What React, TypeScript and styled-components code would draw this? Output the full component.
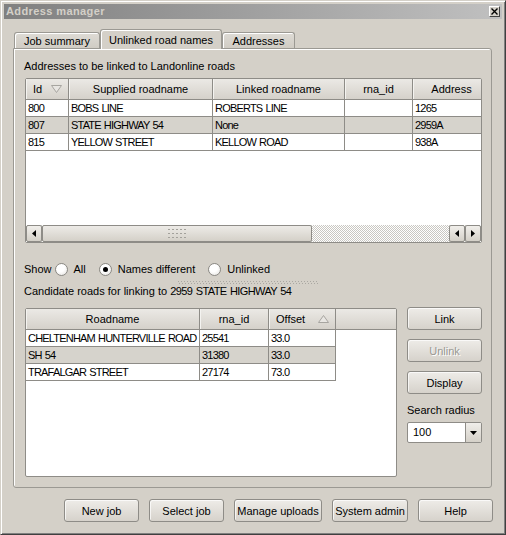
import React from "react";
import styled, { createGlobalStyle } from "styled-components";

const GlobalStyle = createGlobalStyle`
  html, body { margin: 0; padding: 0; background: #d4d0c8; }
  body { font-family: "Liberation Sans", Arial, sans-serif; font-size: 11px; color: #000; }
  * { box-sizing: border-box; }
`;

const LINE = "#8e8c87";

const Window = styled.div`
  width: 506px;
  height: 535px;
  background: #d4d0c8;
  border: 1px solid;
  border-color: #d4d0c8 #404040 #404040 #d4d0c8;
  box-shadow: inset 1px 1px #fff, inset -1px -1px #808080;
  padding: 3px;
  display: flex;
  flex-direction: column;
`;

const TitleBar = styled.div`
  height: 15px;
  flex: none;
  display: flex;
  align-items: center;
  padding: 0 2px;
  background: linear-gradient(to right, #808080, #c0c0c0);
`;

const Title = styled.span`
  font-weight: bold;
  font-size: 11px;
  letter-spacing: 0.4px;
  color: #d4d0c8;
  line-height: 15px;
`;

const CloseButton = styled.div`
  margin-left: auto;
  width: 11px;
  height: 11px;
  background: #d4d0c8;
  border: 1px solid;
  border-color: #fff #404040 #404040 #fff;
  display: flex;
  align-items: center;
  justify-content: center;
`;

const Body = styled.div`
  flex: 1;
  display: flex;
  flex-direction: column;
  padding: 10px 10px 0 9px;
`;

const TabBar = styled.div`
  display: flex;
  align-items: flex-end;
  height: 20px;
  padding-left: 1px;
  margin-bottom: -1px;
  position: relative;
  z-index: 1;
`;

const Tab = styled.div<{ $selected?: boolean; $w: number }>`
  width: ${(p) => p.$w}px;
  height: ${(p) => (p.$selected ? 20 : 16)}px;
  margin-bottom: ${(p) => (p.$selected ? 0 : 1)}px;
  border: 1px solid #9b9993;
  border-bottom: none;
  border-radius: 3px 3px 0 0;
  background: ${(p) => (p.$selected ? "#d4d0c8" : "linear-gradient(#dedbd5, #d0ccc4)")};
  box-shadow: inset 1px 1px #fff;
  display: flex;
  align-items: center;
  justify-content: center;
  white-space: nowrap;
`;

const Pane = styled.div`
  height: 440px;
  flex: none;
  border: 1px solid #9b9993;
  border-radius: 0 3px 3px 3px;
  box-shadow: inset 1px 1px #fff;
  padding: 11px 0 0 11px;
  display: flex;
  flex-direction: column;
`;

const SectionLabel = styled.div<{ $mt?: number }>`
  height: 13px;
  line-height: 13px;
  margin-top: ${(p) => p.$mt ?? 0}px;
  margin-left: -1px;
  white-space: nowrap;
`;

const Caps = styled.span`
  letter-spacing: -0.6px;
  word-spacing: 1px;
`;

const TableFrame = styled.div<{ $w: number; $h: number; $mt: number }>`
  width: ${(p) => p.$w}px;
  height: ${(p) => p.$h}px;
  margin-top: ${(p) => p.$mt}px;
  flex: none;
  border: 1px solid ${LINE};
  border-radius: 2px;
  background: #fff;
  overflow: hidden;
  display: flex;
  flex-direction: column;
`;

const HeaderRow = styled.div`
  display: flex;
  height: 21px;
  flex: none;
  border-bottom: 1px solid ${LINE};
  background: linear-gradient(#ebe9e5, #d5d1ca);
`;

const HeaderCell = styled.div<{ $w: number; $sort?: boolean }>`
  width: ${(p) => p.$w}px;
  flex: none;
  border-right: 1px solid ${LINE};
  box-shadow: inset 1px 0 #f4f3f0;
  display: flex;
  align-items: center;
  justify-content: ${(p) => (p.$sort ? "space-between" : "center")};
  padding: ${(p) => (p.$sort ? "0 6px 0 7px" : "0 2px")};
  white-space: nowrap;
  overflow: hidden;
`;

const TableBody = styled.div`
  flex: 1;
  display: flex;
  flex-direction: column;
`;

const DataRow = styled.div`
  display: flex;
  height: 17px;
  flex: none;
`;

const Cell = styled.div<{ $w: number; $alt?: boolean }>`
  width: ${(p) => p.$w}px;
  height: 17px;
  flex: none;
  border-right: 1px solid ${LINE};
  border-bottom: 1px solid ${LINE};
  background: ${(p) => (p.$alt ? "#d6d3cc" : "#fff")};
  padding: 0 2px;
  line-height: 16px;
  white-space: nowrap;
  overflow: hidden;
  letter-spacing: -0.8px;
  word-spacing: 0.8px;
`;

const HScroll = styled.div`
  height: 17px;
  flex: none;
  display: flex;
  background-color: #fff;
  background-image: repeating-conic-gradient(#c9c7c2 0 25%, #fff 0 50%);
  background-size: 2px 2px;
`;

const ScrollBtn = styled.div`
  width: 16px;
  height: 17px;
  flex: none;
  border: 1px solid ${LINE};
  border-radius: 2px;
  background: linear-gradient(#f1efeb, #d4d0c8);
  display: flex;
  align-items: center;
  justify-content: center;
`;

const Thumb = styled.div<{ $w: number }>`
  width: ${(p) => p.$w}px;
  flex: none;
  border: 1px solid ${LINE};
  border-radius: 2px;
  background: linear-gradient(#edebe7, #d4d0c8);
  display: flex;
  align-items: center;
  justify-content: center;
`;

const Grip = styled.div`
  width: 18px;
  height: 9px;
  background-image:
    linear-gradient(90deg, #a3a19b 2px, transparent 2px),
    linear-gradient(90deg, #a3a19b 2px, transparent 2px),
    linear-gradient(90deg, #a3a19b 2px, transparent 2px);
  background-size: 4px 1px;
  background-position: 0 0, 0 4px, 0 8px;
  background-repeat: repeat-x;
`;

const Track = styled.div`
  flex: 1;
`;

const FilterRow = styled.div`
  display: flex;
  align-items: center;
  height: 16px;
  margin-top: 18px;
  margin-left: -1px;
  white-space: nowrap;
`;

const ShowLabel = styled.span`
  margin-right: 3px;
`;

const RadioOption = styled.label`
  display: flex;
  align-items: center;
  gap: 6px;
  margin-right: 13px;
`;

const RadioCircle = styled.span<{ $checked?: boolean }>`
  width: 13px;
  height: 13px;
  border-radius: 50%;
  border: 1px solid #8a8883;
  background: radial-gradient(circle at 40% 35%, #fff 40%, #e2e0db);
  display: flex;
  align-items: center;
  justify-content: center;
  &::after {
    content: "";
    width: 5px;
    height: 5px;
    border-radius: 50%;
    background: #000;
    display: ${(p) => (p.$checked ? "block" : "none")};
  }
`;

const Splitter = styled.div`
  width: 140px;
  height: 3px;
  margin: 4px 0 0 153px;
  background-image:
    linear-gradient(90deg, #aaa8a2 1px, transparent 1px),
    linear-gradient(90deg, #aaa8a2 1px, transparent 1px);
  background-size: 3px 1px, 3px 1px;
  background-position: 0 0, 1px 2px;
  background-repeat: repeat-x;
`;

const LowerSection = styled.div`
  display: flex;
  gap: 10px;
`;

const SideColumn = styled.div`
  width: 75px;
  display: flex;
  flex-direction: column;
  margin-top: 9px;
`;

const Button = styled.button<{ $w?: number; $mt?: number }>`
  width: ${(p) => p.$w ?? 75}px;
  height: 23px;
  flex: none;
  margin-top: ${(p) => p.$mt ?? 0}px;
  border: 1px solid ${LINE};
  border-radius: 3px;
  background: linear-gradient(#eeece8, #d6d2cb);
  box-shadow: inset 1px 1px rgba(255, 255, 255, 0.7);
  font: 11px "Liberation Sans", Arial, sans-serif;
  color: #000;
  padding: 0;
  white-space: nowrap;
  &:disabled {
    color: #9a9893;
    text-shadow: 1px 1px #fff;
  }
`;

const SideLabel = styled.div`
  height: 13px;
  line-height: 13px;
  margin-top: 10px;
  white-space: nowrap;
`;

const Combo = styled.div`
  width: 75px;
  height: 21px;
  margin-top: 5px;
  border: 1px solid ${LINE};
  border-radius: 2px;
  background: #fff;
  display: flex;
  overflow: hidden;
`;

const ComboText = styled.div`
  flex: 1;
  padding-left: 5px;
  line-height: 19px;
`;

const ComboArrow = styled.div`
  width: 16px;
  border-left: 1px solid ${LINE};
  background: linear-gradient(#f0eeea, #d4d0c8);
  display: flex;
  align-items: center;
  justify-content: center;
`;

const FooterRow = styled.div`
  display: flex;
  justify-content: flex-end;
  gap: 10px;
  margin-top: 11px;
  margin-right: -1px;
`;

const SortArrow = ({ up }: { up?: boolean }) => (
  <svg width="11" height="8" viewBox="0 0 11 8">
    <polygon
      points={up ? "5.5,0.5 10.5,7.5 0.5,7.5" : "0.5,0.5 10.5,0.5 5.5,7.5"}
      fill="#e8e6e2"
      stroke="#a7a5a0"
    />
  </svg>
);

const Arrow = ({ dir }: { dir: "left" | "right" | "down" }) => {
  if (dir === "down")
    return (
      <svg width="7" height="4" viewBox="0 0 7 4">
        <polygon points="0,0 7,0 3.5,4" fill="#000" />
      </svg>
    );
  return (
    <svg width="4" height="7" viewBox="0 0 4 7">
      <polygon points={dir === "left" ? "4,0 4,7 0,3.5" : "0,0 0,7 4,3.5"} fill="#000" />
    </svg>
  );
};

type Col = { label: string; w: number; sort?: "up" | "down" };

const upperCols: Col[] = [
  { label: "Id", w: 43, sort: "down" },
  { label: "Supplied roadname", w: 144 },
  { label: "Linked roadname", w: 132 },
  { label: "rna_id", w: 68 },
  { label: "Address", w: 78 },
];

const upperRows = [
  ["800", "BOBS LINE", "ROBERTS LINE", "", "1265"],
  ["807", "STATE HIGHWAY 54", "None", "", "2959A"],
  ["815", "YELLOW STREET", "KELLOW ROAD", "", "938A"],
];

const lowerCols: Col[] = [
  { label: "Roadname", w: 174 },
  { label: "rna_id", w: 69 },
  { label: "Offset", w: 67, sort: "up" },
];

const lowerRows = [
  ["CHELTENHAM HUNTERVILLE ROAD", "25541", "33.0"],
  ["SH 54", "31380", "33.0"],
  ["TRAFALGAR STREET", "27174", "73.0"],
];

const Header = ({ cols }: { cols: Col[] }) => (
  <HeaderRow>
    {cols.map((c) => (
      <HeaderCell key={c.label} $w={c.w} $sort={!!c.sort}>
        <span>{c.label}</span>
        {c.sort && <SortArrow up={c.sort === "up"} />}
      </HeaderCell>
    ))}
  </HeaderRow>
);

const Rows = ({ cols, rows }: { cols: Col[]; rows: string[][] }) => (
  <>
    {rows.map((r, i) => (
      <DataRow key={i}>
        {r.map((v, j) => (
          <Cell key={j} $w={cols[j].w} $alt={i % 2 === 1}>
            {v}
          </Cell>
        ))}
      </DataRow>
    ))}
  </>
);

export default function App() {
  return (
    <>
      <GlobalStyle />
      <Window>
        <TitleBar>
          <Title>Address manager</Title>
          <CloseButton>
            <svg width="7" height="7" viewBox="0 0 7 7">
              <path d="M0.5 0.5 L6.5 6.5 M6.5 0.5 L0.5 6.5" stroke="#000" strokeWidth="1.4" />
            </svg>
          </CloseButton>
        </TitleBar>
        <Body>
          <TabBar>
            <Tab $w={86}>Job summary</Tab>
            <Tab $w={122} $selected>
              Unlinked road names
            </Tab>
            <Tab $w={73}>Addresses</Tab>
          </TabBar>
          <Pane>
            <SectionLabel>Addresses to be linked to Landonline roads</SectionLabel>
            <TableFrame $w={457} $h={165} $mt={5}>
              <Header cols={upperCols} />
              <TableBody>
                <Rows cols={upperCols} rows={upperRows} />
              </TableBody>
              <HScroll>
                <ScrollBtn>
                  <Arrow dir="left" />
                </ScrollBtn>
                <Thumb $w={270}>
                  <Grip />
                </Thumb>
                <Track />
                <ScrollBtn>
                  <Arrow dir="left" />
                </ScrollBtn>
                <ScrollBtn>
                  <Arrow dir="right" />
                </ScrollBtn>
              </HScroll>
            </TableFrame>
            <FilterRow>
              <ShowLabel>Show</ShowLabel>
              <RadioOption>
                <RadioCircle />
                All
              </RadioOption>
              <RadioOption>
                <RadioCircle $checked />
                Names different
              </RadioOption>
              <RadioOption>
                <RadioCircle />
                Unlinked
              </RadioOption>
            </FilterRow>
            <Splitter />
            <SectionLabel $mt={1}>
              Candidate roads for linking to <Caps>2959 STATE HIGHWAY 54</Caps>
            </SectionLabel>
            <LowerSection>
              <TableFrame $w={372} $h={169} $mt={10}>
                <Header cols={lowerCols} />
                <TableBody>
                  <Rows cols={lowerCols} rows={lowerRows} />
                </TableBody>
              </TableFrame>
              <SideColumn>
                <Button>Link</Button>
                <Button $mt={9} disabled>
                  Unlink
                </Button>
                <Button $mt={9}>Display</Button>
                <SideLabel>Search radius</SideLabel>
                <Combo>
                  <ComboText>100</ComboText>
                  <ComboArrow>
                    <Arrow dir="down" />
                  </ComboArrow>
                </Combo>
              </SideColumn>
            </LowerSection>
          </Pane>
          <FooterRow>
            <Button>New job</Button>
            <Button>Select job</Button>
            <Button $w={88}>Manage uploads</Button>
            <Button $w={76}>System admin</Button>
            <Button>Help</Button>
          </FooterRow>
        </Body>
      </Window>
    </>
  );
}
